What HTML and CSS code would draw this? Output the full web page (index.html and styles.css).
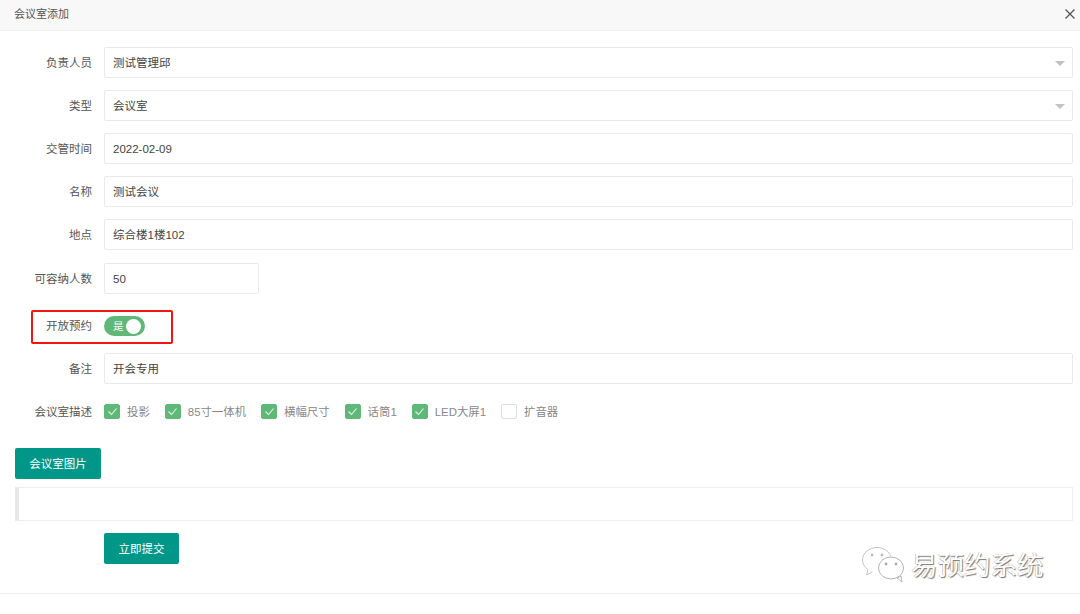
FILE: index.html
```html
<!DOCTYPE html>
<html lang="zh-CN">
<head>
<meta charset="utf-8">
<title>会议室添加</title>
<link rel="stylesheet" href="styles.css">
</head>
<body>
<div class="dialog">
  <header class="titlebar">
    <span class="title">会议室添加</span>
    <svg class="close" width="12" height="12" viewBox="0 0 12 12"><path d="M1.500 1.500l9 9M10.500 1.500l-9 9" stroke="#555" stroke-width="1.300" fill="none"/></svg>
  </header>
  <form class="form">
    <div class="row"><label class="label">负责人员</label><div class="field select">测试管理邱<i class="caret"></i></div></div>
    <div class="row"><label class="label">类型</label><div class="field select">会议室<i class="caret"></i></div></div>
    <div class="row"><label class="label">交管时间</label><div class="field">2022-02-09</div></div>
    <div class="row"><label class="label">名称</label><div class="field">测试会议</div></div>
    <div class="row"><label class="label">地点</label><div class="field">综合楼1楼102</div></div>
    <div class="row row-short"><label class="label">可容纳人数</label><div class="field short">50</div></div>
    <div class="row toggle-row">
      <label class="label">开放预约</label>
      <div class="switch"><span class="switch-text">是</span><i class="knob"></i></div>
      <div class="highlight"></div>
    </div>
    <div class="row"><label class="label">备注</label><div class="field">开会专用</div></div>
    <div class="row check-row">
      <label class="label">会议室描述</label>
      <div class="checks">
        <span class="check"><i class="box on"><svg width="11" height="9" viewBox="0 0 11 9"><path d="M1.500 4.500l3 3 5-6" stroke="#e4f3e8" stroke-width="1.100" fill="none"/></svg></i>投影</span>
        <span class="check"><i class="box on"><svg width="11" height="9" viewBox="0 0 11 9"><path d="M1.500 4.500l3 3 5-6" stroke="#e4f3e8" stroke-width="1.100" fill="none"/></svg></i>85寸一体机</span>
        <span class="check"><i class="box on"><svg width="11" height="9" viewBox="0 0 11 9"><path d="M1.500 4.500l3 3 5-6" stroke="#e4f3e8" stroke-width="1.100" fill="none"/></svg></i>横幅尺寸</span>
        <span class="check"><i class="box on"><svg width="11" height="9" viewBox="0 0 11 9"><path d="M1.500 4.500l3 3 5-6" stroke="#e4f3e8" stroke-width="1.100" fill="none"/></svg></i>话筒1</span>
        <span class="check"><i class="box on"><svg width="11" height="9" viewBox="0 0 11 9"><path d="M1.500 4.500l3 3 5-6" stroke="#e4f3e8" stroke-width="1.100" fill="none"/></svg></i>LED大屏1</span>
        <span class="check"><i class="box"></i>扩音器</span>
      </div>
    </div>
    <div class="upload">
      <button type="button" class="btn">会议室图片</button>
      <div class="preview"></div>
    </div>
    <div class="submit"><button type="button" class="btn btn-submit">立即提交</button></div>
  </form>
  <div class="watermark">
    <svg class="wx" width="44" height="38" viewBox="0 0 44 38">
      <path d="M16 1.500C8 1.500 1.500 7 1.500 14c0 4 2.200 7.400 5.500 9.700L5.500 29l6-3.200" fill="#fff" stroke="#c4c4c4" stroke-width="1"/>
      <path d="M16 1.500c6.500 0 12 3.700 13.800 8.800" fill="none" stroke="#c4c4c4" stroke-width="1"/>
      <ellipse cx="30" cy="22" rx="12.500" ry="11" fill="#fff" stroke="#b4b4b4" stroke-width="1"/>
      <path d="M36 32l5 4-1-6z" fill="#fff" stroke="#b4b4b4" stroke-width="1"/>
      <circle cx="11" cy="9" r="1.400" fill="#bbb"/><circle cx="21" cy="9" r="1.400" fill="#bbb"/>
      <circle cx="25" cy="18" r="1.400" fill="#aaa"/><circle cx="35" cy="18" r="1.400" fill="#aaa"/>
    </svg>
    <span class="wm-text">易预约系统</span>
  </div>
</div>
</body>
</html>
```

FILE: styles.css
```css
* { box-sizing: border-box; }
html, body { margin: 0; padding: 0; background: #fff; }
body {
  font-family: "Liberation Sans", "Noto Sans CJK SC", sans-serif;
  font-size: 11.5px;
  color: #333;
  width: 1080px;
  height: 614px;
  overflow: hidden;
}
.dialog { position: relative; height: 594px; border-bottom: 1px solid #eee; }
.titlebar {
  height: 31px;
  background: #f8f8f8;
  border-bottom: 1px solid #eee;
  display: flex;
  align-items: center;
  justify-content: space-between;
  padding: 0 4px 5px 14px;
}
.title { font-size: 11px; color: #555; }
.close { display: block; margin-top: 3px; }
.form { padding: 16px 7px 0 0; display: flex; flex-direction: column; }
.row { display: flex; align-items: center; height: 31px; margin-bottom: 12px; position: relative; }
.row-short { margin-top: 1px; }
.label { width: 92px; text-align: right; color: #555; flex: none; margin-right: 12px; padding-bottom: 2px; }
.field {
  flex: 1;
  height: 31px;
  line-height: 31px;
  border: 1px solid #eaeaea;
  border-radius: 2px;
  padding: 0 8px;
  color: #444;
  position: relative;
  background: #fff;
}
.field.short { flex: none; width: 155px; }
.caret {
  position: absolute;
  right: 7px;
  top: 13px;
  width: 0; height: 0;
  border: 5px solid transparent;
  border-top: 5px solid #c2c2c2;
  border-bottom: 0;
}
.toggle-row { height: 20px; margin: 10px 0 17px; }
.switch {
  width: 41px;
  height: 20px;
  border-radius: 10px;
  background: #5fb878;
  display: flex;
  align-items: center;
  justify-content: space-between;
  padding: 0 2px 0 9px;
  color: #fff;
  font-size: 10.500px;
}
.switch-text { margin-top: -1px; }
.knob { width: 15px; height: 15px; border-radius: 50%; background: #fff; margin-right: 2px; }
.highlight {
  position: absolute;
  left: 31px;
  top: -6px;
  width: 142px;
  height: 34px;
  border: 2px solid #f5150f;
  border-radius: 2px;
  pointer-events: none;
}
.check-row { height: 15px; margin: 8px 0 29px; }
.checks { display: flex; gap: 15px; align-items: center; }
.check { display: flex; align-items: center; color: #888; font-size: 11.400px; line-height: 14px; }
.box {
  width: 16px;
  height: 15px;
  border: 1px solid #ddd;
  border-radius: 2px;
  margin-right: 7px;
  display: flex;
  align-items: center;
  justify-content: center;
  background: #fff;
}
.box.on { background: #5fb878; border-color: #5fb878; }
.btn {
  border: 0;
  background: #009688;
  color: #fff;
  border-radius: 2px;
  height: 31px;
  width: 86px;
  font: inherit;
  padding: 0 0 1px;
  display: block;
}
.upload { padding-left: 15px; }
.preview {
  height: 34px;
  margin-top: 8px;
  border: 1px solid #eee;
  border-left: 4px solid #e8e8e8;
}
.submit { padding: 12px 0 0 104px; }
.btn-submit { width: 75px; }
.watermark {
  position: absolute;
  left: 861px;
  top: 546px;
  display: flex;
  align-items: center;
  gap: 6px;
}
.wx { display: block; }
.wm-text {
  font-size: 26.500px;
  color: #fff;
  text-shadow: 1px 1px 1px #777, -0.500px -0.500px 0 #aaa;
  white-space: nowrap;
  margin-top: -3px;
}
```
